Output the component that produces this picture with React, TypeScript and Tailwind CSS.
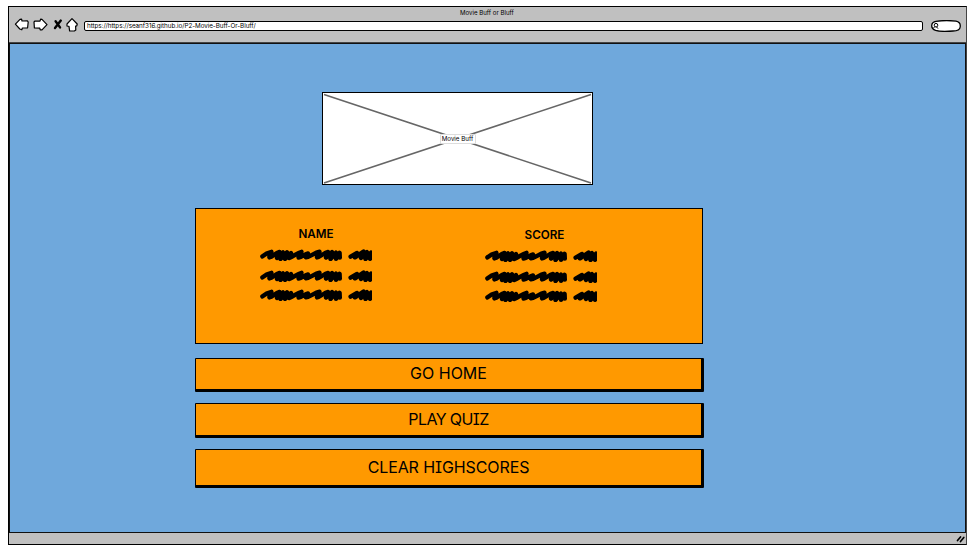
import React from 'react';

const inter = "font-['Inter','Liberation_Sans',sans-serif]";

function Scribble({ className = '' }: { className?: string }) {
  return (
    <svg className={`block h-[12px] w-[112px] ${className}`} viewBox="0 0 112 12" fill="none" stroke="#000" strokeWidth="4.4" strokeLinecap="round" strokeLinejoin="round">
      <path d="M2.4 7.4 C5 5 8 3.4 11.4 2.8 C11 5 9 6.4 9.4 8.4 C13 7.6 15 4 19.5 3 C19 5 16.5 7 17 9 L23 3.4 L20.5 10 L27 3.4 L25 9.8 L31 4 L29 9 C33 8 37 3.6 41.5 2.8 C41 5 38 6.6 38.6 8.6 C42 8 45 5 48 4.4 L46 8.2 C51 7.8 54 3.6 59.5 2.8 C59 5 56.6 6.4 57 8.4 C61 7.6 64 3.6 68 3 L66 8.6 L72 3 L70.5 10 L76 3.6 L76 9.8 L79.6 3.8 L79.8 8.6" />
      <path d="M90.6 7.6 L97 4 L95 8.4 L103.5 2.6 L101 9 L107 3.2 L105.5 10 L111 3.6 L110 9.8 L114 3.6 L113 9" />
    </svg>
  );
}

function ScoreColumn({ title, className, titleClassName }: { title: string; className: string; titleClassName: string }) {
  return (
    <div className={`flex w-[112px] flex-col ${className}`}>
      <h2 className={`h-[16px] text-center font-semibold leading-[18px] ${inter} ${titleClassName}`}>{title}</h2>
      <Scribble className="mt-[8px]" />
      <Scribble className="mt-[9px]" />
      <Scribble className="mt-[7px]" />
    </div>
  );
}

function MenuButton({ label, className }: { label: string; className: string }) {
  return (
    <button className={`block w-[509px] rounded-[1px] border border-r-[3px] border-b-[3px] border-black bg-[#ff9900] text-center [font-feature-settings:'cv08'] ${inter} ${className}`}>
      {label}
    </button>
  );
}

function Toolbar() {
  return (
    <header className="h-[36px] shrink-0 border-b border-[#444] bg-[#c0c0c0]">
      <div className="h-[11px] pl-[451px] pt-[1px]">
        <h1 className={`whitespace-nowrap text-[6.1px] leading-[10px] ${inter}`}>Movie Buff or Bluff</h1>
      </div>
      <div className="flex h-[13px] items-center">
        <svg className="ml-[5px] h-[16px] w-[66px] shrink-0" viewBox="0 0 66 16" fill="#fff" stroke="#000" strokeWidth="1.2" strokeLinejoin="round">
          <path d="M1.4 7.2 L6 2.4 L7.6 2.2 L8 4 L13.4 3.8 L14.2 5 L13.6 10.8 L8.4 11 L7.8 12.8 L5.8 12 Z" />
          <path d="M20 5 L21 4 L26 4.2 L26.6 2.2 L28 2.4 L33 7.6 L28 12.8 L26.2 12.8 L25.8 11.2 L20.4 11 Z" />
          <path d="M41.6 4.2 L46 10.4 M46.8 3.6 L41 11" strokeWidth="2.4" strokeLinecap="round" />
          <path d="M58 1.6 L63.2 7 L62.8 8.8 L61.6 9 L61.8 13 L60.4 14 L55.6 13.8 L55 9.4 L53 9 L53 7 Z" />
        </svg>
        <div className="ml-[4px] mt-[3px] flex h-[10px] w-[839px] items-center rounded-[2px] border border-black bg-white pl-[2px]">
          <span className={`whitespace-nowrap text-[6.3px] leading-[8px] tracking-[-0.05px] ${inter}`}>https://https://seanf316.github.io/P2-Movie-Buff-Or-Bluff/</span>
        </div>
        <svg className="ml-[8px] mt-[3px] h-[12px] w-[30px] shrink-0" viewBox="0 0 30 12" fill="none" stroke="#000">
          <path d="M5 1.4 C10 .6 20 .5 25 1.2 C29 2 29.6 4 29.2 7 C28.8 10.5 26 11 22 11 C16 11.5 8 11.4 4.6 10.4 C1.6 9.4 .5 7 .8 5 C1 3 2.6 1.8 5 1.4 Z" fill="#fff" strokeWidth="1.3" />
          <circle cx="5" cy="5.2" r="1.8" />
          <path d="M3.8 6.6 L2.6 8 M5.6 7 L7 8.6" />
        </svg>
      </div>
    </header>
  );
}

export default function App() {
  return (
    <div className="h-[551px] w-[974px] overflow-hidden bg-white pl-[8px] pt-[6px] text-black">
      <div className="flex h-[539px] w-[959px] flex-col border border-black border-r-[#444] bg-[#c0c0c0]">
        <Toolbar />
        <main className="h-[490px] shrink-0 border border-[#111] bg-[#6fa8dc] pl-[185px]">
          <div className="ml-[127px] mt-[48px] flex h-[93px] w-[271px] border border-black bg-white">
            <div className="grid w-full">
              <svg className="col-start-1 row-start-1 h-[91px] w-[269px]" viewBox="0 0 269 91" stroke="#666" strokeWidth="1.6">
                <path d="M1 1.5 L268 90 M268 1.5 L1 90" />
              </svg>
              <span className={`col-start-1 row-start-1 h-[10px] w-[36px] place-self-center whitespace-nowrap rounded-[1px] border border-[#ddd] bg-white text-center text-[6.2px] leading-[8px] ${inter}`}>Movie Buff</span>
            </div>
          </div>
          <section className="mt-[23px] flex h-[136px] w-[508px] border border-black bg-[#ff9900]">
            <ScoreColumn title="NAME" className="ml-[64px] mt-[16px]" titleClassName="text-[11.7px]" />
            <ScoreColumn title="SCORE" className="ml-[113px] mt-[17px]" titleClassName="pl-[7px] text-[11.7px]" />
          </section>
          <MenuButton label="GO HOME" className="mt-[14px] h-[34px] pb-[2px] text-[16px]" />
          <MenuButton label="PLAY QUIZ" className="mt-[11px] h-[35px] pb-[2px] text-[16px] tracking-[-0.6px]" />
          <MenuButton label="CLEAR HIGHSCORES" className="mt-[11px] h-[39px] pb-[2px] text-[16px] tracking-[-0.1px]" />
        </main>
        <footer className="flex flex-1 items-center justify-end pr-[1px]">
          <svg className="h-[8px] w-[9px]" viewBox="0 0 9 8" stroke="#000" strokeWidth="1.7" strokeLinecap="round">
            <path d="M1.5 5.5 L4.5 2 M4.5 6.5 L7.8 2.5" />
          </svg>
        </footer>
      </div>
    </div>
  );
}
